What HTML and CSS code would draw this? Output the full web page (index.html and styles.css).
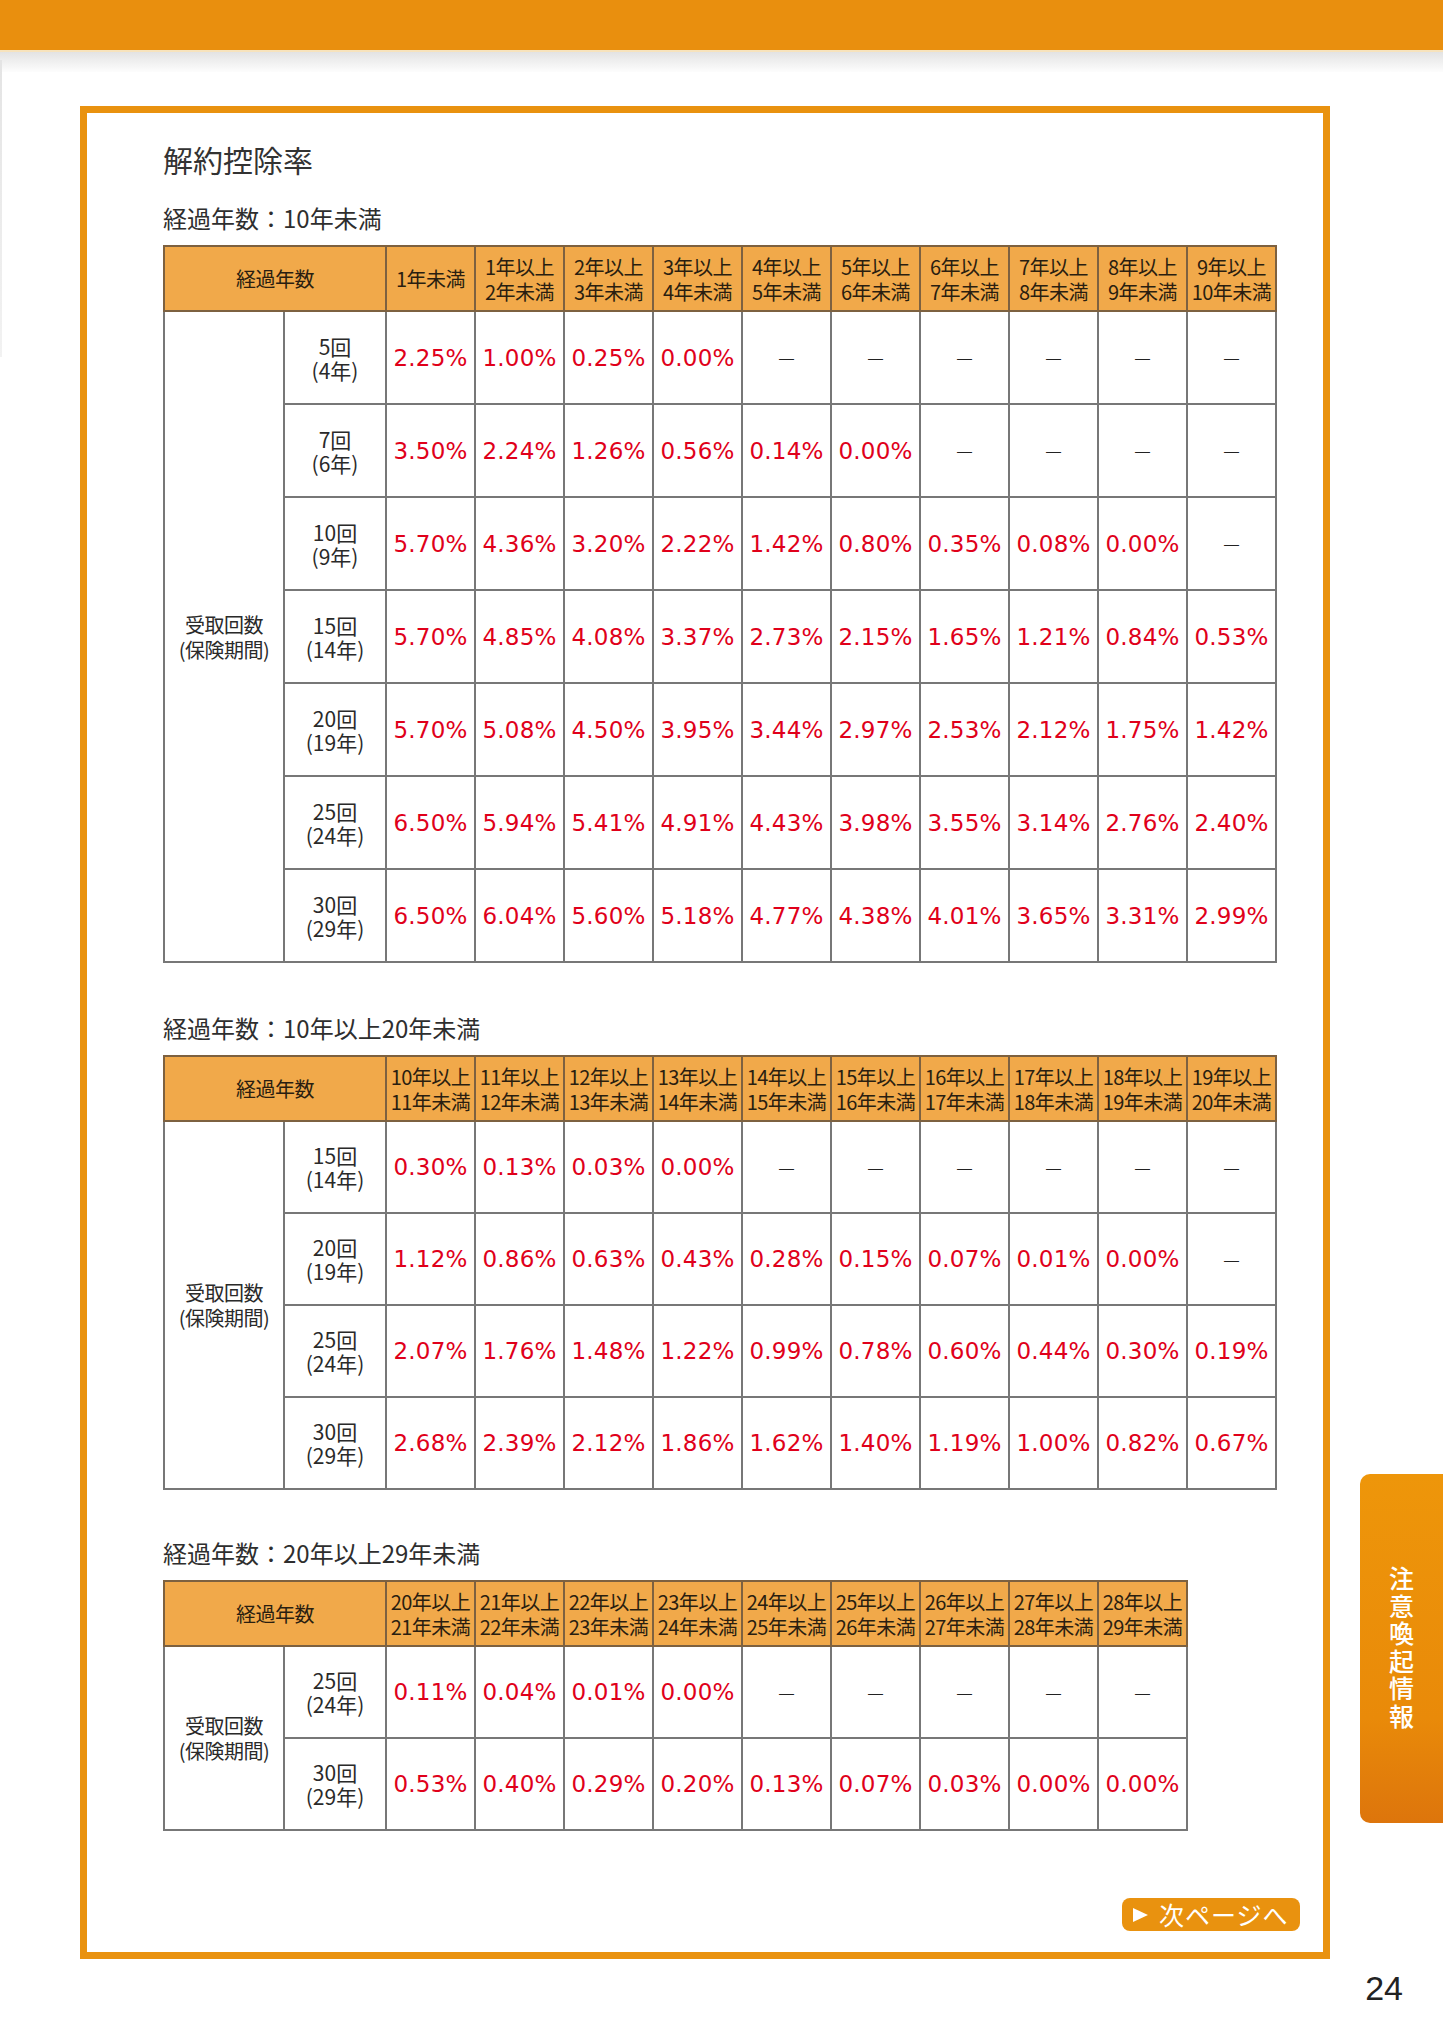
FILE: index.html
```html
<!DOCTYPE html>
<html lang="ja">
<head>
<meta charset="utf-8">
<title>解約控除率</title>
<link rel="stylesheet" href="styles.css">
</head>
<body>
<div class="topbar"></div>
<div class="topshade"></div>
<div class="edge"></div>

<div class="frame">
  <h1 class="title">解約控除率</h1>

  <h2 class="subtitle">経過年数：10年未満</h2>
  <table class="rate">
    <colgroup><col class="ca"><col class="cb"><col class="cd"><col class="cd"><col class="cd"><col class="cd"><col class="cd"><col class="cd"><col class="cd"><col class="cd"><col class="cd"><col class="cd"></colgroup>
    <thead>
      <tr>
        <th colspan="2">経過年数</th>
        <th>1年未満</th>
        <th>1年以上<br>2年未満</th>
        <th>2年以上<br>3年未満</th>
        <th>3年以上<br>4年未満</th>
        <th>4年以上<br>5年未満</th>
        <th>5年以上<br>6年未満</th>
        <th>6年以上<br>7年未満</th>
        <th>7年以上<br>8年未満</th>
        <th>8年以上<br>9年未満</th>
        <th>9年以上<br>10年未満</th>
      </tr>
    </thead>
    <tbody>
      <tr>
        <td class="la" rowspan="7"><span class="ln">受取回数</span><span class="ln">(保険期間)</span></td>
        <td class="lb"><span class="ln">5回</span><span class="ln">(4年)</span></td>
        <td class="p">2.25%</td><td class="p">1.00%</td><td class="p">0.25%</td><td class="p">0.00%</td>
        <td class="d">—</td><td class="d">—</td><td class="d">—</td><td class="d">—</td><td class="d">—</td><td class="d">—</td>
      </tr>
      <tr>
        <td class="lb"><span class="ln">7回</span><span class="ln">(6年)</span></td>
        <td class="p">3.50%</td><td class="p">2.24%</td><td class="p">1.26%</td><td class="p">0.56%</td><td class="p">0.14%</td><td class="p">0.00%</td>
        <td class="d">—</td><td class="d">—</td><td class="d">—</td><td class="d">—</td>
      </tr>
      <tr>
        <td class="lb"><span class="ln">10回</span><span class="ln">(9年)</span></td>
        <td class="p">5.70%</td><td class="p">4.36%</td><td class="p">3.20%</td><td class="p">2.22%</td><td class="p">1.42%</td><td class="p">0.80%</td><td class="p">0.35%</td><td class="p">0.08%</td><td class="p">0.00%</td>
        <td class="d">—</td>
      </tr>
      <tr>
        <td class="lb"><span class="ln">15回</span><span class="ln">(14年)</span></td>
        <td class="p">5.70%</td><td class="p">4.85%</td><td class="p">4.08%</td><td class="p">3.37%</td><td class="p">2.73%</td><td class="p">2.15%</td><td class="p">1.65%</td><td class="p">1.21%</td><td class="p">0.84%</td><td class="p">0.53%</td>
      </tr>
      <tr>
        <td class="lb"><span class="ln">20回</span><span class="ln">(19年)</span></td>
        <td class="p">5.70%</td><td class="p">5.08%</td><td class="p">4.50%</td><td class="p">3.95%</td><td class="p">3.44%</td><td class="p">2.97%</td><td class="p">2.53%</td><td class="p">2.12%</td><td class="p">1.75%</td><td class="p">1.42%</td>
      </tr>
      <tr>
        <td class="lb"><span class="ln">25回</span><span class="ln">(24年)</span></td>
        <td class="p">6.50%</td><td class="p">5.94%</td><td class="p">5.41%</td><td class="p">4.91%</td><td class="p">4.43%</td><td class="p">3.98%</td><td class="p">3.55%</td><td class="p">3.14%</td><td class="p">2.76%</td><td class="p">2.40%</td>
      </tr>
      <tr>
        <td class="lb"><span class="ln">30回</span><span class="ln">(29年)</span></td>
        <td class="p">6.50%</td><td class="p">6.04%</td><td class="p">5.60%</td><td class="p">5.18%</td><td class="p">4.77%</td><td class="p">4.38%</td><td class="p">4.01%</td><td class="p">3.65%</td><td class="p">3.31%</td><td class="p">2.99%</td>
      </tr>
    </tbody>
  </table>

  <h2 class="subtitle sub-gap">経過年数：10年以上20年未満</h2>
  <table class="rate compact">
    <colgroup><col class="ca"><col class="cb"><col class="cd"><col class="cd"><col class="cd"><col class="cd"><col class="cd"><col class="cd"><col class="cd"><col class="cd"><col class="cd"><col class="cd"></colgroup>
    <thead>
      <tr>
        <th colspan="2">経過年数</th>
        <th>10年以上<br>11年未満</th>
        <th>11年以上<br>12年未満</th>
        <th>12年以上<br>13年未満</th>
        <th>13年以上<br>14年未満</th>
        <th>14年以上<br>15年未満</th>
        <th>15年以上<br>16年未満</th>
        <th>16年以上<br>17年未満</th>
        <th>17年以上<br>18年未満</th>
        <th>18年以上<br>19年未満</th>
        <th>19年以上<br>20年未満</th>
      </tr>
    </thead>
    <tbody>
      <tr>
        <td class="la" rowspan="4"><span class="ln">受取回数</span><span class="ln">(保険期間)</span></td>
        <td class="lb"><span class="ln">15回</span><span class="ln">(14年)</span></td>
        <td class="p">0.30%</td><td class="p">0.13%</td><td class="p">0.03%</td><td class="p">0.00%</td>
        <td class="d">—</td><td class="d">—</td><td class="d">—</td><td class="d">—</td><td class="d">—</td><td class="d">—</td>
      </tr>
      <tr>
        <td class="lb"><span class="ln">20回</span><span class="ln">(19年)</span></td>
        <td class="p">1.12%</td><td class="p">0.86%</td><td class="p">0.63%</td><td class="p">0.43%</td><td class="p">0.28%</td><td class="p">0.15%</td><td class="p">0.07%</td><td class="p">0.01%</td><td class="p">0.00%</td>
        <td class="d">—</td>
      </tr>
      <tr>
        <td class="lb"><span class="ln">25回</span><span class="ln">(24年)</span></td>
        <td class="p">2.07%</td><td class="p">1.76%</td><td class="p">1.48%</td><td class="p">1.22%</td><td class="p">0.99%</td><td class="p">0.78%</td><td class="p">0.60%</td><td class="p">0.44%</td><td class="p">0.30%</td><td class="p">0.19%</td>
      </tr>
      <tr>
        <td class="lb"><span class="ln">30回</span><span class="ln">(29年)</span></td>
        <td class="p">2.68%</td><td class="p">2.39%</td><td class="p">2.12%</td><td class="p">1.86%</td><td class="p">1.62%</td><td class="p">1.40%</td><td class="p">1.19%</td><td class="p">1.00%</td><td class="p">0.82%</td><td class="p">0.67%</td>
      </tr>
    </tbody>
  </table>

  <h2 class="subtitle sub-gap2">経過年数：20年以上29年未満</h2>
  <table class="rate compact">
    <colgroup><col class="ca"><col class="cb"><col class="cd"><col class="cd"><col class="cd"><col class="cd"><col class="cd"><col class="cd"><col class="cd"><col class="cd"><col class="cd"></colgroup>
    <thead>
      <tr>
        <th colspan="2">経過年数</th>
        <th>20年以上<br>21年未満</th>
        <th>21年以上<br>22年未満</th>
        <th>22年以上<br>23年未満</th>
        <th>23年以上<br>24年未満</th>
        <th>24年以上<br>25年未満</th>
        <th>25年以上<br>26年未満</th>
        <th>26年以上<br>27年未満</th>
        <th>27年以上<br>28年未満</th>
        <th>28年以上<br>29年未満</th>
      </tr>
    </thead>
    <tbody>
      <tr>
        <td class="la" rowspan="2"><span class="ln">受取回数</span><span class="ln">(保険期間)</span></td>
        <td class="lb"><span class="ln">25回</span><span class="ln">(24年)</span></td>
        <td class="p">0.11%</td><td class="p">0.04%</td><td class="p">0.01%</td><td class="p">0.00%</td>
        <td class="d">—</td><td class="d">—</td><td class="d">—</td><td class="d">—</td><td class="d">—</td>
      </tr>
      <tr>
        <td class="lb"><span class="ln">30回</span><span class="ln">(29年)</span></td>
        <td class="p">0.53%</td><td class="p">0.40%</td><td class="p">0.29%</td><td class="p">0.20%</td><td class="p">0.13%</td><td class="p">0.07%</td><td class="p">0.03%</td><td class="p">0.00%</td><td class="p">0.00%</td>
      </tr>
    </tbody>
  </table>

  <a class="next" href="#"><span class="tri"></span><span>次ページへ</span></a>
</div>

<div class="pagenum">24</div>

<div class="sidetab"><span>注意喚起情報</span></div>
</body>
</html>
```

FILE: styles.css
```css
* { box-sizing: border-box; }

html, body {
  margin: 0;
  padding: 0;
  background: #fff;
}

body {
  width: 1443px;
  height: 2040px;
  position: relative;
  overflow: hidden;
  font-family: "Noto Sans CJK JP", "Noto Sans", sans-serif;
  color: #2a2a2a;
}

.topbar {
  height: 50px;
  background: #E98F0E;
}

.topshade {
  height: 22px;
  background: linear-gradient(#f7e3bd 0, #f7e3bd 2px, #e3e3e3 2px, #fdfdfd 22px);
}

.edge {
  position: absolute;
  left: 0;
  top: 60px;
  width: 2px;
  height: 297px;
  background: linear-gradient(#e4e4e4, #f2f2f2);
}

.frame {
  margin: 34px 0 0 80px;
  width: 1250px;
  height: 1853px;
  border: 7px solid #E9920F;
  padding: 28px 23px 21px 76px;
  display: flex;
  flex-direction: column;
  align-items: flex-start;
}

.title {
  margin: 0;
  font-size: 30px;
  line-height: 36px;
  font-weight: 400;
  color: #333;
}

.subtitle {
  margin: 26px 0 12px;
  font-size: 24px;
  line-height: 30px;
  font-weight: 400;
  color: #2e2e2e;
}

.sub-gap { margin-top: 50px; }
.sub-gap2 { margin-top: 48px; }

.rate {
  border-collapse: collapse;
  table-layout: fixed;
}

.rate .ca { width: 120px; }
.rate .cb { width: 102px; }
.rate .cd { width: 89px; }

.rate th,
.rate td {
  border: 2px solid #777;
  padding: 0;
  text-align: center;
  vertical-align: middle;
  white-space: nowrap;
}

.rate thead th {
  background: #F1A94A;
  border-color: #7d6140;
  height: 65px;
  font-size: 20px;
  line-height: 25px;
  font-weight: 400;
  color: #2a1e10;
  letter-spacing: -0.5px;
}

.rate tbody tr { height: 93px; }
.rate.compact tbody tr { height: 92px; }

.rate .ln {
  display: block;
}

.rate .la {
  font-size: 20px;
  line-height: 25px;
  color: #2a2a2a;
  letter-spacing: -0.5px;
}

.rate .lb {
  font-size: 21px;
  line-height: 24px;
  color: #2a2a2a;
}

.rate .p {
  font-family: "DejaVu Sans", "Liberation Sans", sans-serif;
  font-size: 23px;
  color: #E0001A;
  letter-spacing: 0.2px;
}

.rate .d {
  font-family: "Liberation Sans", sans-serif;
  font-size: 15px;
  color: #222;
}

.next {
  margin-top: auto;
  align-self: flex-end;
  width: 178px;
  height: 33px;
  border-radius: 8px;
  background: #E9920F;
  color: #fff;
  text-decoration: none;
  display: flex;
  align-items: center;
  gap: 11px;
  padding-left: 11px;
  font-size: 25px;
  line-height: 1;
  letter-spacing: 1px;
}

.tri {
  width: 0;
  height: 0;
  border-top: 7px solid transparent;
  border-bottom: 7px solid transparent;
  border-left: 15px solid #fff;
}

.pagenum {
  margin-top: 9px;
  padding-right: 40px;
  text-align: right;
  font-family: "Liberation Sans", sans-serif;
  font-size: 34px;
  line-height: 40px;
  color: #222;
}

.sidetab {
  position: absolute;
  left: 1360px;
  top: 1474px;
  width: 83px;
  height: 349px;
  border-radius: 10px 0 0 10px;
  background: linear-gradient(#EE960A, #E98A09 70%, #DD750C);
  display: flex;
  align-items: center;
  justify-content: center;
}

.sidetab span {
  writing-mode: vertical-rl;
  color: #fff;
  font-size: 25px;
  letter-spacing: 2.5px;
  font-weight: 500;
}
```
